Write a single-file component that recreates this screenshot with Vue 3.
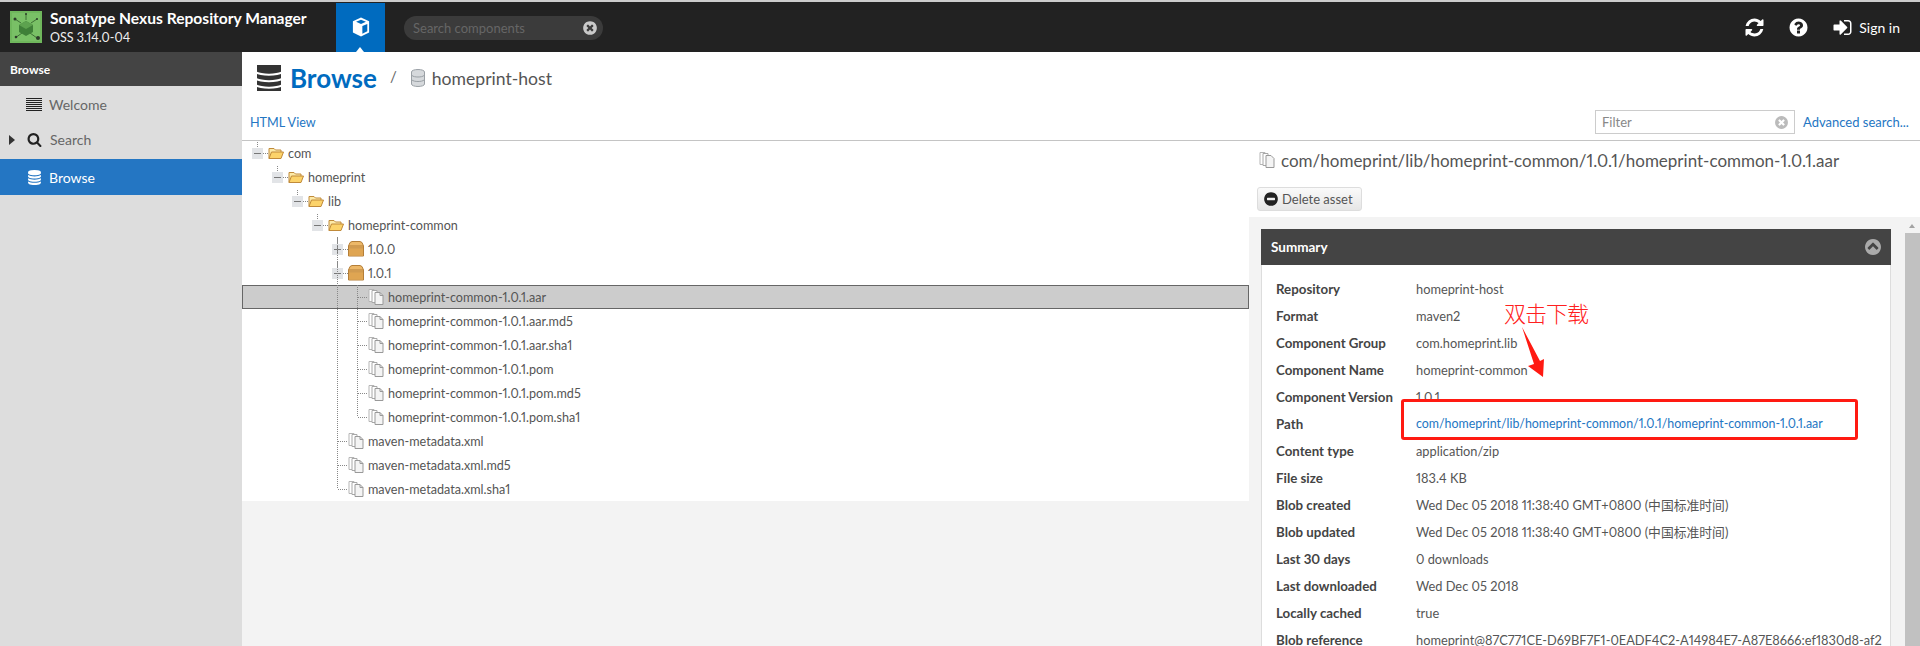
<script setup>
const fa = {
  db: 'M896 768q237 0 443-43t325-127v170q0 69-103 128t-280 93.5-385 34.5-385-34.5-280-93.5-103-128v-170q119 84 325 127t443 43zm0 768q237 0 443-43t325-127v170q0 69-103 128t-280 93.5-385 34.5-385-34.5-280-93.5-103-128v-170q119 84 325 127t443 43zm0-384q237 0 443-43t325-127v170q0 69-103 128t-280 93.5-385 34.5-385-34.5-280-93.5-103-128v-170q119 84 325 127t443 43zm0-1152q208 0 385 34.5t280 93.5 103 128v128q0 69-103 128t-280 93.5-385 34.5-385-34.5-280-93.5-103-128v-128q0-69 103-128t280-93.5 385-34.5z',
  help: 'M1024 1376v-192q0-14-9-23t-23-9h-192q-14 0-23 9t-9 23v192q0 14 9 23t23 9h192q14 0 23-9t9-23zm256-672q0-88-55.5-163t-138.5-116-170-41q-243 0-371 213-15 24 8 42l132 100q7 6 19 6 16 0 25-12 53-68 86-92 34-24 86-24 48 0 85.5 26t37.5 59q0 38-20 61t-68 45q-63 28-115.5 86.5t-52.5 125.5v36q0 14 9 23t23 9h192q14 0 23-9t9-23q0-19 21.5-49.5t54.5-49.5q32-18 49-28.5t46-35 44.5-48 28-60.5 12.5-81zm384 192q0 209-103 385.5t-279.5 279.5-385.5 103-385.5-103-279.5-279.5-103-385.5 103-385.5 279.5-279.5 385.5-103 385.5 103 279.5 279.5 103 385.5z',
  search: 'M1216 832q0-185-131.5-316.5t-316.5-131.5-316.5 131.5-131.5 316.5 131.5 316.5 316.5 131.5 316.5-131.5 131.5-316.5zm512 832q0 52-38 90t-90 38q-54 0-90-38l-343-342q-179 124-399 124-143 0-273.5-55.5t-225-150-150-225-55.5-273.5 55.5-273.5 150-225 225-150 273.5-55.5 273.5 55.5 225 150 150 225 55.5 273.5q0 220-124 399l343 343q37 37 37 90z',
  signin: 'M1312 896q0 26-19 45l-544 544q-19 19-45 19t-45-19-19-45v-288h-448q-26 0-45-19t-19-45v-384q0-26 19-45t45-19h448v-288q0-26 19-45t45-19 45 19l544 544q19 19 19 45zm352-352v704q0 119-84.5 203.5t-203.5 84.5h-320q-13 0-22.5-9.5t-9.5-22.5q0-4-1-20t-.5-26.5 3-23.5 10-19.5 20.5-6.5h320q66 0 113-47t47-113v-704q0-66-47-113t-113-47h-312l-11.5-1-11.5-3-8-5.5-7-9-2-13.5q0-4-1-20t-.5-26.5 3-23.5 10-19.5 20.5-6.5h320q119 0 203.5 84.5t84.5 203.5z',
  refresh: 'M1639 1056q0 5-1 7-64 268-268 434.5t-478 166.5q-146 0-282.5-55t-243.5-157l-129 129q-19 19-45 19t-45-19-19-45v-448q0-26 19-45t45-19h448q26 0 45 19t19 45-19 45l-137 137q71 66 161 102t187 36q134 0 250-65t186-179q11-17 53-117 8-23 30-23h192q13 0 22.5 9.5t9.5 22.5zm25-800v448q0 26-19 45t-45 19h-448q-26 0-45-19t-19-45 19-45l138-138q-148-137-349-137-134 0-250 65t-186 179q-11 17-53 117-8 23-30 23h-199q-13 0-22.5-9.5t-9.5-22.5v-7q65-268 270-434.5t480-166.5q146 0 284 55.5t245 156.5l130-129q19-19 45-19t45 19 19 45z',
  times: 'M1277 1122q0-26-19-45l-181-181 181-181q19-19 19-45 0-27-19-46l-90-90q-19-19-46-19-26 0-45 19l-181 181-181-181q-19-19-45-19-27 0-46 19l-90 90q-19 19-19 46 0 26 19 45l181 181-181 181q-19 19-19 45 0 27 19 46l90 90q19 19 46 19 26 0 45-19l181-181 181 181q19 19 45 19 27 0 46-19l90-90q19-19 19-46zm387-226q0 209-103 385.5t-279.5 279.5-385.5 103-385.5-103-279.5-279.5-103-385.5 103-385.5 279.5-279.5 385.5-103 385.5 103 279.5 279.5 103 385.5z',
  minus: 'M1344 960v-128q0-26-19-45t-45-19h-768q-26 0-45 19t-19 45v128q0 26 19 45t45 19h768q26 0 45-19t19-45zm320-64q0 209-103 385.5t-279.5 279.5-385.5 103-385.5-103-279.5-279.5-103-385.5 103-385.5 279.5-279.5 385.5-103 385.5 103 279.5 279.5 103 385.5z',
  up: 'M1293 1139l102-102q19-19 19-45t-19-45l-454-454q-19-19-45-19t-45 19l-454 454q-19 19-19 45t19 45l102 102q19 19 45 19t45-19l307-307 307 307q19 19 45 19t45-19zm371-243q0 209-103 385.5t-279.5 279.5-385.5 103-385.5-103-279.5-279.5-103-385.5 103-385.5 279.5-279.5 385.5-103 385.5 103 279.5 279.5 103 385.5z'
}

const tree = [
  { name: 'com', depth: 0, kind: 'folder', toggle: 'minus' },
  { name: 'homeprint', depth: 1, kind: 'folder', toggle: 'minus' },
  { name: 'lib', depth: 2, kind: 'folder', toggle: 'minus' },
  { name: 'homeprint-common', depth: 3, kind: 'folder', toggle: 'minus' },
  { name: '1.0.0', depth: 4, kind: 'box', toggle: 'plus' },
  { name: '1.0.1', depth: 4, kind: 'box', toggle: 'minus' },
  { name: 'homeprint-common-1.0.1.aar', depth: 5, kind: 'file', selected: true },
  { name: 'homeprint-common-1.0.1.aar.md5', depth: 5, kind: 'file' },
  { name: 'homeprint-common-1.0.1.aar.sha1', depth: 5, kind: 'file' },
  { name: 'homeprint-common-1.0.1.pom', depth: 5, kind: 'file' },
  { name: 'homeprint-common-1.0.1.pom.md5', depth: 5, kind: 'file' },
  { name: 'homeprint-common-1.0.1.pom.sha1', depth: 5, kind: 'file' },
  { name: 'maven-metadata.xml', depth: 4, kind: 'file' },
  { name: 'maven-metadata.xml.md5', depth: 4, kind: 'file' },
  { name: 'maven-metadata.xml.sha1', depth: 4, kind: 'file' }
]

const summary = [
  ['Repository', 'homeprint-host'],
  ['Format', 'maven2'],
  ['Component Group', 'com.homeprint.lib'],
  ['Component Name', 'homeprint-common'],
  ['Component Version', '1.0.1'],
  ['Path', 'com/homeprint/lib/homeprint-common/1.0.1/homeprint-common-1.0.1.aar', true],
  ['Content type', 'application/zip'],
  ['File size', '183.4 KB'],
  ['Blob created', 'Wed Dec 05 2018 11:38:40 GMT+0800 (中国标准时间)'],
  ['Blob updated', 'Wed Dec 05 2018 11:38:40 GMT+0800 (中国标准时间)'],
  ['Last 30 days', '0 downloads'],
  ['Last downloaded', 'Wed Dec 05 2018'],
  ['Locally cached', 'true'],
  ['Blob reference', 'homeprint@87C771CE-D69BF7F1-0EADF4C2-A14984E7-A87E8666:ef1830d8-af2']
]
</script>

<template>
  <div class="app">
    <header class="topbar">
      <svg class="logo" viewBox="0 0 32 32">
        <rect width="32" height="32" fill="#6fb75c" />
        <rect x="2" y="2" width="28" height="28" fill="#79c066" />
        <g stroke="#2f5a2a" stroke-width="0.8">
          <path d="M16 3v6M5 8l6 4M27 8l-6 4M5 27l7-5M27 27l-7-5" />
        </g>
        <circle cx="5" cy="8" r="1.5" fill="#2d3d2a" />
        <circle cx="27" cy="8" r="1" fill="#2d3d2a" />
        <circle cx="16" cy="3" r="1" fill="#2d3d2a" />
        <circle cx="6" cy="26" r="1.3" fill="#2d3d2a" />
        <circle cx="28" cy="27" r="2" fill="#2d3d2a" />
        <path d="M16 10l7 4v7l-7 4-7-4v-7z" fill="#3f7f38" />
        <path d="M16 10l7 4-7 4-7-4z" fill="#5da24f" />
      </svg>
      <div class="brand">
        <div class="brand-name">Sonatype Nexus Repository Manager</div>
        <div class="brand-version">OSS 3.14.0-04</div>
      </div>
      <div class="tab">
        <svg class="tab-cube" viewBox="0 0 20 22">
          <path d="M10 0.5l9 4v12.5l-9 4.5-9-4.5V4.500z" fill="#fff" />
          <path d="M10 3l5.500 2.300L10 7.600 4.500 5.300z" fill="#006bbf" />
          <path d="M11.500 10v8.500l5.500-2.700V7.700z" fill="#006bbf" />
        </svg>
        <span class="tab-notch"></span>
      </div>
      <div class="top-search">
        <span>Search components</span>
        <svg class="ico top-clear" viewBox="0 0 1792 1792"><path :d="fa.times" /></svg>
      </div>
      <div class="top-actions">
        <svg class="ico act" viewBox="0 0 1792 1792"><path :d="fa.refresh" /></svg>
        <svg class="ico act" viewBox="0 0 1792 1792"><path :d="fa.help" /></svg>
        <div class="signin">
          <svg class="ico act" viewBox="0 0 1792 1792"><path :d="fa.signin" /></svg>
          <span>Sign in</span>
        </div>
      </div>
    </header>

    <div class="body">
      <aside class="nav">
        <div class="nav-head">Browse</div>
        <div class="nav-item welcome">
          <span class="lines"><i v-for="n in 7" :key="n"></i></span>
          <span>Welcome</span>
        </div>
        <div class="nav-item search">
          <span class="caret"></span>
          <svg class="ico nav-ico" viewBox="0 0 1792 1792"><path :d="fa.search" /></svg>
          <span>Search</span>
        </div>
        <div class="nav-item active">
          <svg class="ico nav-ico" viewBox="0 0 1792 1792"><path :d="fa.db" /></svg>
          <span>Browse</span>
        </div>
      </aside>

      <main class="main">
        <div class="crumbs">
          <svg class="ico crumb-db" viewBox="256 128 1280 1536" preserveAspectRatio="none"><path :d="fa.db" /></svg>
          <span class="crumb-title">Browse</span>
          <span class="crumb-sep">/</span>
          <svg class="crumb-small" viewBox="0 0 14 18">
            <path d="M0.500 3c0-3.300 13-3.300 13 0v12c0 3.300-13 3.300-13 0z" fill="#d6d9dc" stroke="#9aa0a5" />
            <path d="M1 6.500c2 2 10 2 12 0M1 11c2 2 10 2 12 0" fill="none" stroke="#9aa0a5" />
          </svg>
          <span class="crumb-repo">homeprint-host</span>
        </div>

        <div class="toolbar">
          <a class="link html-view">HTML View</a>
          <div class="filter">
            <span>Filter</span>
            <svg class="ico filter-clear" viewBox="0 0 1792 1792"><path :d="fa.times" /></svg>
          </div>
          <a class="link adv">Advanced search...</a>
        </div>

        <div class="content">
          <section class="tree-pane">
            <ul class="tree">
              <li v-for="node in tree" :key="node.name" class="row" :class="{ selected: node.selected }">
                <span class="indent" :style="{ width: node.depth * 20 + 'px' }"></span>
                <span v-if="node.toggle" class="toggle" :class="node.toggle">
                  <i class="stub"></i>
                  <i class="dash"></i>
                </span>
                <span v-else class="toggle-gap"></span>
                <svg v-if="node.kind === 'folder'" class="node-ico" viewBox="0 0 16 14">
                  <path d="M1 12.500V2.500h5l1.500 1.500H13v2" fill="#fdeaa8" stroke="#c08a3a" />
                  <path d="M1 12.500l2.500-6.500H15.500L13 12.500z" fill="#fcd36a" stroke="#c08a3a" />
                </svg>
                <svg v-else-if="node.kind === 'box'" class="node-ico" viewBox="0 0 16 16">
                  <path d="M2 1.500l2-1h8l2 1 1.500 3.500v10H.500V5z" fill="#edb868" stroke="#b57f38" />
                  <path d="M.5 5h15M.5 7h15" stroke="#b57f38" />
                  <rect x="1" y="7.500" width="14" height="7" fill="#dfa552" />
                </svg>
                <svg v-else class="node-ico" viewBox="0 0 16 16">
                  <path d="M1 .5h5v12H1z" fill="#fff" stroke="#b5b5b5" />
                  <path d="M4 1.500h5v12H4z" fill="#fff" stroke="#a8a8a8" />
                  <path d="M7 3.500h5l3 3v9H7z" fill="#f4f4f4" stroke="#999" />
                  <path d="M12 3.500v3h3" fill="none" stroke="#999" />
                </svg>
                <span class="node-name">{{ node.name }}</span>
              </li>
              <li class="guide outer"></li>
              <li class="guide inner"></li>
            </ul>
          </section>

          <section class="detail">
            <div class="detail-title">
              <svg class="title-ico" viewBox="0 0 16 16">
                <path d="M1 .5h5v12H1z" fill="#fff" stroke="#b5b5b5" />
                <path d="M4 1.500h5v12H4z" fill="#fff" stroke="#a8a8a8" />
                <path d="M7 3.500h5l3 3v9H7z" fill="#f4f4f4" stroke="#999" />
              </svg>
              <span>com/homeprint/lib/homeprint-common/1.0.1/homeprint-common-1.0.1.aar</span>
            </div>
            <button class="delete">
              <svg class="ico del-ico" viewBox="0 0 1792 1792"><path :d="fa.minus" /></svg>
              <span>Delete asset</span>
            </button>
            <div class="detail-scroll">
              <div class="card">
                <div class="card-head">
                  <span>Summary</span>
                  <svg class="ico card-toggle" viewBox="128 128 1536 1536"><path :d="fa.up" /></svg>
                </div>
                <dl class="card-body">
                  <div v-for="item in summary" :key="item[0]" class="kv">
                    <dt>{{ item[0] }}</dt>
                    <dd :class="{ linked: item[2] }">{{ item[1] }}</dd>
                  </div>
                </dl>
              </div>
              <div class="scrollbar">
                <span class="sb-arrow"></span>
                <span class="sb-thumb"></span>
              </div>
            </div>
          </section>
        </div>
      </main>
    </div>

    <div class="note-text">双击下载</div>
    <div class="note-box"></div>
    <svg class="note-arrow" viewBox="0 0 30 56">
      <polygon points="3,1 21,35 25,33 24,51 9,40 15,38" fill="#ff1a12" />
    </svg>
  </div>
</template>

<style scoped>
.app {
  position: relative;
  width: 1920px;
  height: 646px;
  overflow: hidden;
  font-family: Lato, "Noto Sans CJK SC", sans-serif;
  font-variant-numeric: proportional-nums;
  color: #555;
  background: #f3f3f3;
}
.ico { fill: currentColor; display: block; flex: none; }

.topbar {
  height: 50px;
  border-top: 2px solid #ccc;
  background: #222;
  display: flex;
  align-items: center;
  color: #fff;
}
.logo { width: 32px; height: 32px; margin-left: 10px; flex: none; }
.brand { margin-left: 8px; width: 286px; padding-top: 2px; }
.brand-name { font-size: 15.600px; font-weight: 700; line-height: 18px; white-space: nowrap; }
.brand-version { font-size: 12.500px; line-height: 18px; margin-top: 2px; color: #eee; }
.tab {
  position: relative;
  width: 49px;
  align-self: stretch;
  background: #006bbf;
  display: flex;
  align-items: center;
  justify-content: center;
  margin-top: 1px;
}
.tab-cube { width: 18px; height: 20px; margin-top: -2px; }
.tab-notch {
  position: absolute;
  left: 20px;
  bottom: 0;
  border-left: 4.500px solid transparent;
  border-right: 4.500px solid transparent;
  border-bottom: 5px solid #fff;
}
.top-search {
  width: 199px;
  height: 24px;
  margin-left: 19px;
  margin-top: 2px;
  border-radius: 12px;
  background: #3b3b3b;
  display: flex;
  align-items: center;
  justify-content: space-between;
  padding: 0 5px 0 9px;
  box-sizing: border-box;
  font-size: 13px;
  color: #666;
}
.top-clear { width: 16px; height: 16px; color: #c9c9c9; }
.top-actions {
  margin-left: auto;
  display: flex;
  align-items: center;
  gap: 23px;
  padding-right: 20px;
  font-size: 14px;
}
.act { width: 21px; height: 21px; }
.signin { display: flex; align-items: center; gap: 6px; }

.body { display: flex; height: 594px; }
.nav { width: 242px; flex: none; background: #ddd; font-size: 14px; color: #666; }
.nav-head {
  height: 34px;
  line-height: 35px;
  background: #444;
  color: #fff;
  font-size: 12px;
  font-weight: 700;
  padding-left: 10px;
}
.nav-item { display: flex; align-items: center; height: 36px; box-sizing: border-box; }
.welcome { height: 34px; padding-left: 26px; padding-top: 3px; gap: 7px; }
.search { height: 39px; padding-left: 9px; }
.active { background: #2476c3; color: #fff; padding-left: 27px; gap: 7px; }
.lines { width: 16px; display: flex; flex-direction: column; gap: 1px; }
.lines i { height: 1px; background: #222; }
.caret {
  border-left: 6px solid #333;
  border-top: 5px solid transparent;
  border-bottom: 5px solid transparent;
  margin-right: 12px;
}
.nav-ico { width: 15px; height: 15px; }
.search .nav-ico { color: #222; margin-right: 8px; }

.main { flex: 1; display: flex; flex-direction: column; min-width: 0; }
.crumbs {
  height: 52px;
  background: #fff;
  display: flex;
  align-items: center;
  padding-left: 15px;
}
.crumb-db { width: 24px; height: 26px; color: #333; }
.crumb-title { margin-left: 9px; font-size: 26px; font-weight: 700; color: #006bbf; }
.crumb-sep { margin-left: 13px; font-size: 15px; color: #666; margin-top: -4px; }
.crumb-small { margin-left: 14px; width: 14px; height: 18px; }
.crumb-repo { margin-left: 7px; font-size: 17.600px; color: #555; }
.toolbar {
  height: 36px;
  background: #fff;
  border-bottom: 1px solid #c4c4c4;
  display: flex;
  align-items: center;
  padding-left: 8px;
  font-size: 13px;
}
.link { color: #2476c3; }
.html-view { font-size: 12.600px; }
.filter {
  margin-left: auto;
  width: 200px;
  height: 24px;
  box-sizing: border-box;
  border: 1px solid #ccc;
  background: #fff;
  display: flex;
  align-items: center;
  justify-content: space-between;
  padding: 0 5px 0 6px;
  color: #888;
}
.filter-clear { width: 15px; height: 15px; color: #bbb; }
.adv { margin-left: 8px; margin-right: 9px; width: 108px; white-space: nowrap; }

.content { display: flex; flex: 1; min-height: 0; }
.tree-pane { width: 1007px; flex: none; background: #f3f3f3; }
.tree {
  position: relative;
  list-style: none;
  margin: 0;
  padding: 0;
  background: #fff;
  font-size: 12.600px;
  color: #555;
}
.row {
  position: relative;
  height: 24px;
  display: flex;
  align-items: center;
  padding-left: 10px;
  box-sizing: border-box;
}
.row.selected {
  background: #ccc;
  border: 1px solid #666;
  padding-left: 9px;
}
.indent { flex: none; }
.toggle {
  position: relative;
  flex: none;
  width: 11px;
  height: 11px;
  background: #e2e4e7;
  margin-right: 5px;
}
.toggle::before {
  content: "";
  position: absolute;
  left: 2px;
  right: 2px;
  top: 5px;
  height: 1px;
  background: #777;
}
.toggle.plus::after {
  content: "";
  position: absolute;
  top: 2px;
  bottom: 2px;
  left: 5px;
  width: 1px;
  background: #777;
}
.stub {
  position: absolute;
  left: 5px;
  bottom: 100%;
  width: 1px;
  height: 6px;
  background-image: linear-gradient(to bottom, #888 1px, transparent 1px);
  background-size: 1px 2px;
}
.dash {
  position: absolute;
  left: 100%;
  top: 5px;
  width: 5px;
  height: 1px;
  background-image: linear-gradient(to right, #888 1px, transparent 1px);
  background-size: 2px 1px;
}
.toggle-gap {
  flex: none;
  width: 16px;
  height: 1px;
  background-image: linear-gradient(to right, #888 1px, transparent 1px);
  background-size: 2px 1px;
  background-clip: content-box;
  padding-left: 6px;
  box-sizing: border-box;
}
.node-ico { width: 16px; height: 16px; margin-right: 4px; flex: none; }
.node-name { white-space: nowrap; }
.guide {
  position: absolute;
  width: 1px;
  background-image: linear-gradient(to bottom, #888 1px, transparent 1px);
  background-size: 1px 2px;
}
.outer { left: 95px; top: 96px; height: 252px; }
.inner { left: 115px; top: 144px; height: 132px; }

.detail { flex: 1; min-width: 0; background: #fff; display: flex; flex-direction: column; }
.detail-title {
  height: 38px;
  display: flex;
  align-items: center;
  padding-left: 10px;
  font-size: 17px;
  color: #555;
  white-space: nowrap;
}
.title-ico { width: 16px; height: 16px; margin-right: 6px; flex: none; }
.delete {
  align-self: flex-start;
  margin: 8px 0 6px 8px;
  width: 105px;
  height: 24px;
  border: 1px solid #ddd;
  border-radius: 3px;
  background: linear-gradient(#fafafa, #e6e6e6);
  display: flex;
  align-items: center;
  gap: 3px;
  padding: 0 0 0 5px;
  font: 13px Lato, sans-serif;
  color: #555;
}
.del-ico { width: 16px; height: 16px; color: #222; }
.detail-scroll {
  flex: 1;
  min-height: 0;
  background: #f3f3f3;
  display: flex;
  padding-top: 12px;
  box-sizing: border-box;
  position: relative;
}
.card { width: 630px; margin-left: 12px; flex: none; }
.card-head {
  height: 36px;
  background: #444;
  color: #fff;
  font-size: 13.500px;
  font-weight: 700;
  display: flex;
  align-items: center;
  justify-content: space-between;
  padding: 0 10px 0 10px;
}
.card-toggle { width: 16px; height: 16px; color: #aaa; }
.card-body {
  margin: 0;
  background: #fff;
  border: 1px solid #ddd;
  border-top: 0;
  padding: 10px 14px 40px;
  font-size: 12.800px;
}
.kv { display: flex; align-items: center; height: 27px; line-height: 12px; white-space: nowrap; }
.kv dt { width: 140px; flex: none; font-weight: 700; font-size: 13.300px; color: #444; }
.kv dd { margin: 0; color: #555; }
.kv dd.linked { color: #2476c3; font-size: 12.400px; }
.scrollbar {
  position: absolute;
  top: 0;
  right: 0;
  bottom: 0;
  width: 15px;
  background: #f3f3f3;
}
.sb-arrow {
  position: absolute;
  left: 4px;
  top: 7px;
  border-left: 3.500px solid transparent;
  border-right: 3.500px solid transparent;
  border-bottom: 4px solid #a3a3a3;
}
.sb-thumb {
  position: absolute;
  left: 0;
  right: 0;
  top: 16px;
  bottom: 0;
  background: #c1c1c1;
}

.note-text {
  position: absolute;
  left: 1504px;
  top: 298px;
  font-family: "Noto Sans CJK SC", sans-serif;
  font-size: 22px;
  letter-spacing: -1px;
  line-height: 28px;
  color: #ff2020;
  font-weight: 300;
}
.note-box {
  position: absolute;
  left: 1401px;
  top: 399px;
  width: 457px;
  height: 41px;
  box-sizing: border-box;
  border: 3px solid #ff1a12;
  border-radius: 3px;
}
.note-arrow {
  position: absolute;
  left: 1519px;
  top: 326px;
  width: 30px;
  height: 56px;
}
</style>
